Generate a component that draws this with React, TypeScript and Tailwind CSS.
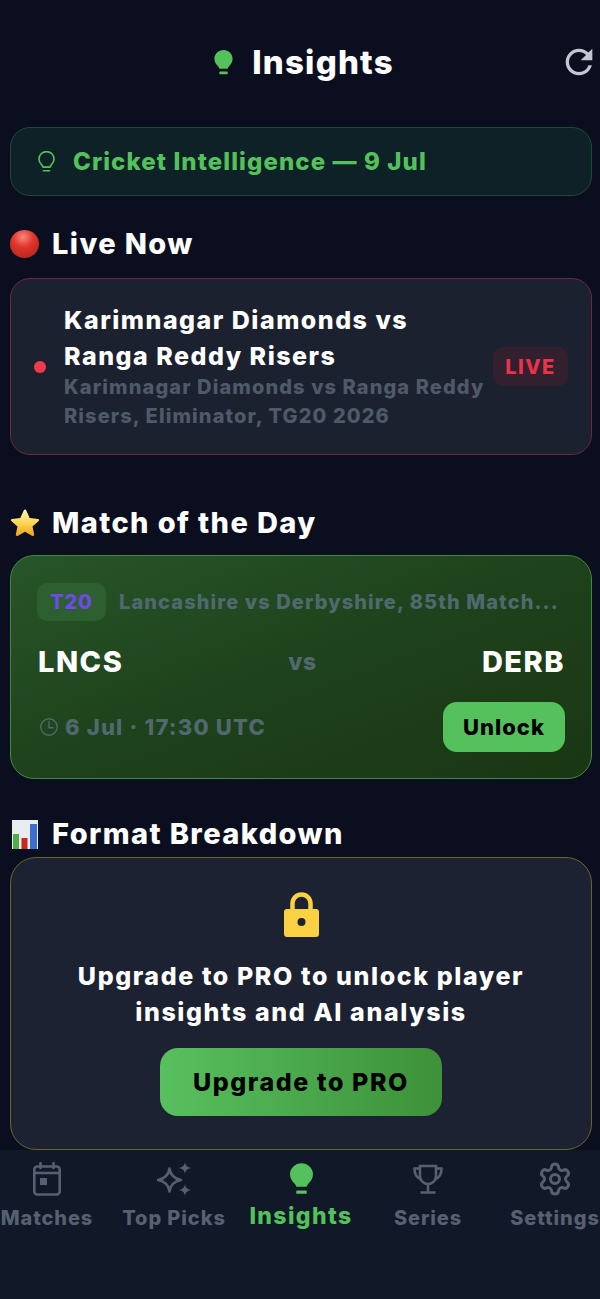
import { Settings } from "lucide-react";
import { IoTimeOutline } from "react-icons/io5";
import { MdRefresh } from "react-icons/md";

const BULB_PATH =
  "M12 0C5.400 0 0 5.200 0 11.600c0 4.200 2.200 7.200 4.400 9.400 1.200 1.200 1.800 2.200 2.200 3.600h10.800c.4-1.400 1-2.400 2.200-3.600 2.200-2.200 4.400-5.200 4.400-9.400C24 5.200 18.600 0 12 0z";

const SolidBulb = ({ className }: { className: string }) => (
  <svg viewBox="0 0 24 33" className={className} fill="currentColor">
    <path d={BULB_PATH} />
    <rect x="6.500" y="28.500" width="11" height="3.500" rx="1" />
  </svg>
);

const OutlineBulb = () => (
  <svg viewBox="0 0 26 35" className="w-[17px] h-[22px] text-[#55c15c]" fill="none" stroke="currentColor" strokeWidth="2.600">
    <path transform="translate(1 1)" d={BULB_PATH} />
    <path d="M8 31.500h10" strokeLinecap="round" />
  </svg>
);

const RedBall = () => (
  <svg viewBox="0 0 30 30" className="w-[30px] h-[30px] shrink-0">
    <defs>
      <radialGradient id="ball" cx="45%" cy="25%" r="80%">
        <stop offset="0%" stopColor="#f58a7c" />
        <stop offset="45%" stopColor="#e2352b" />
        <stop offset="100%" stopColor="#b3261e" />
      </radialGradient>
    </defs>
    <ellipse cx="14.500" cy="15" rx="14.500" ry="14" fill="url(#ball)" />
  </svg>
);

const StarEmoji = () => (
  <svg viewBox="0 0 30 30" className="w-[30px] h-[30px] shrink-0">
    <defs>
      <linearGradient id="star" x1="0" y1="0" x2="0" y2="1">
        <stop offset="0%" stopColor="#fff3b8" />
        <stop offset="55%" stopColor="#fbd34d" />
        <stop offset="100%" stopColor="#f0a020" />
      </linearGradient>
    </defs>
    <path
      d="M15 1.500c.6 0 1 .4 1.300 1l3.400 7.600 8.300.9c1.200.1 1.500 1.200.7 2l-6.200 5.500 1.700 8.100c.2 1.100-.8 1.800-1.800 1.300L15 23.800l-7.400 4.100c-1 .5-2-.2-1.800-1.300l1.700-8.100L1.300 13c-.8-.8-.5-1.900.7-2l8.300-.9 3.400-7.600c.3-.6.700-1 1.300-1z"
      fill="url(#star)"
    />
  </svg>
);

const ChartEmoji = () => (
  <svg viewBox="0 0 30 30" className="w-[30px] h-[30px] shrink-0">
    <rect x="2" y="1" width="26" height="29" fill="#e9ecef" />
    <rect x="3" y="15" width="6" height="15" fill="#4fae4a" />
    <rect x="11.500" y="19" width="6" height="11" fill="#c8281f" />
    <rect x="20" y="5" width="7" height="25" fill="#3a6fd0" />
  </svg>
);

const LockIcon = () => (
  <svg viewBox="0 0 35 45" className="w-[35px] h-[45px]">
    <path d="M8.500 20V11.500a9 9 0 0 1 18 0V20" fill="none" stroke="#fad143" strokeWidth="4.500" />
    <rect y="17" width="35" height="28" rx="3" fill="#fad143" />
    <ellipse cx="17.500" cy="30" rx="4" ry="4" fill="#1c2231" />
  </svg>
);

const CalendarIcon = () => (
  <svg viewBox="0 0 28 34" className="w-[28px] h-[34px]" fill="none" stroke="currentColor">
    <rect x="1.300" y="4.500" width="25.400" height="28" rx="3" strokeWidth="2.600" />
    <path d="M1.300 11h25.400" strokeWidth="2.600" />
    <path d="M7.500 1v5M20.500 1v5" strokeWidth="2.600" strokeLinecap="round" />
    <rect x="7" y="16" width="7" height="7" fill="currentColor" stroke="none" />
  </svg>
);

const SparklesIcon = () => (
  <svg viewBox="0 0 34 34" className="w-[34px] h-[34px]" fill="currentColor">
    <path
      d="M12.500 6.500C13.500 13 17 16.800 24 18 17 19.200 13.500 23 12.500 29.500 11.500 23 8 19.200 1 18 8 16.800 11.500 13 12.500 6.500z"
      fill="none"
      stroke="currentColor"
      strokeWidth="2.600"
      strokeLinejoin="round"
    />
    <path d="M28 0c.5 3.500 2 5 6 6-4 1-5.500 2.500-6 6-.5-3.500-2-5-6-6 4-1 5.500-2.500 6-6z" />
    <path d="M28 22c.5 3.500 2 5 6 6-4 1-5.500 2.500-6 6-.5-3.500-2-5-6-6 4-1 5.500-2.500 6-6z" />
  </svg>
);

const TrophyIcon = () => (
  <svg viewBox="0 0 30 30" className="w-[30px] h-[30px]" fill="none" stroke="currentColor" strokeWidth="2.600">
    <path d="M7 2h16v10a8 8 0 0 1-16 0z" />
    <path d="M7 4.500H1.500c0 5.500 2 9.500 7 11M23 4.500h5.500c0 5.500-2 9.500-7 11" />
    <path d="M15 20v8M7.500 28.500h15" />
  </svg>
);

const SectionTitle = ({ icon, title }: { icon: React.ReactNode; title: string }) => (
  <div className="flex items-center gap-3">
    {icon}
    <h2 className="text-[29px] leading-[34px] font-extrabold tracking-[1.400px] text-white">{title}</h2>
  </div>
);

const tabs = [
  { key: "matches", label: "Matches", icon: <CalendarIcon /> },
  { key: "picks", label: "Top Picks", icon: <SparklesIcon /> },
  { key: "insights", label: "Insights", icon: <SolidBulb className="w-[23px] h-[34px]" />, active: true },
  { key: "series", label: "Series", icon: <TrophyIcon /> },
  { key: "settings", label: "Settings", icon: <Settings size={36} strokeWidth={2} /> },
];

export default function App() {
  return (
    <div className="w-[600px] h-[1299px] flex flex-col bg-[#0b0e1f] font-['Inter',sans-serif] overflow-hidden">
      <div className="pl-[10px] pr-2 flex flex-col">
        {/* Header */}
        <div className="mt-[42px] h-[36px] grid grid-cols-[1fr_auto_1fr] items-center">
          <div />
          <div className="flex items-center gap-[19px] pl-[6px]">
            <SolidBulb className="w-[19px] h-[25px] text-[#55c15c]" />
            <h1 className="text-[33px] leading-[36px] font-extrabold tracking-[1.200px] text-white">Insights</h1>
          </div>
          <div className="flex justify-end">
            <MdRefresh size={40} className="text-[#c2c6cd] -mr-[7px]" />
          </div>
        </div>

        {/* Banner */}
        <div className="mt-[49px] h-[69px] flex items-center gap-[18px] pl-[27px] rounded-[20px] border border-[#1d4a36] bg-[#0e2126]">
          <OutlineBulb />
          <span className="text-[24px] font-extrabold tracking-[1.100px] text-[#55c15c]">Cricket Intelligence — 9 Jul</span>
        </div>

        <div className="mt-[31px]">
          <SectionTitle icon={<RedBall />} title="Live Now" />
        </div>

        {/* Live card */}
        <div className="mt-[17px] h-[177px] flex items-center rounded-[20px] border border-[#6f2840] bg-[#1c2130] pl-[23px] pr-[23px]">
          <span className="w-3 h-3 rounded-full bg-[#ef3a4f] shrink-0" />
          <div className="ml-[18px] w-[428px] shrink-0">
            <div className="text-[25px] leading-[36px] font-extrabold tracking-[1.500px] text-white whitespace-nowrap">
              Karimnagar Diamonds vs
              <br />
              Ranga Reddy Risers
            </div>
            <div className="mt-[-1px] text-[20px] leading-[29px] font-extrabold tracking-[1.100px] text-[#4f5967] whitespace-nowrap">
              Karimnagar Diamonds vs Ranga Reddy
              <br />
              Risers, Eliminator, TG20 2026
            </div>
          </div>
          <span className="ml-auto shrink-0 h-[39px] w-[75px] flex items-center justify-center rounded-[10px] bg-[#33202f] text-[20px] font-extrabold tracking-[1.500px] text-[#e8334a]">
            LIVE
          </span>
        </div>

        <div className="mt-[51px]">
          <SectionTitle icon={<StarEmoji />} title="Match of the Day" />
        </div>

        {/* Match card */}
        <div className="mt-[15px] h-[224px] rounded-[24px] border border-[#3d8a43] bg-gradient-to-br from-[#28552a] via-[#1e421b] to-[#1a3614] pl-[27px] pr-[26px] pt-[27px]">
          <div className="flex items-center gap-[13px] -ml-[1px]">
            <span className="w-[69px] h-[38px] flex items-center justify-center rounded-[10px] bg-[#2d5f30] text-[20px] font-extrabold tracking-[0.800px] text-[#6e4be8]">
              T20
            </span>
            <span className="text-[20px] font-extrabold tracking-[1.100px] text-[#50696f] whitespace-nowrap">
              Lancashire vs Derbyshire, 85th Match...
            </span>
          </div>
          <div className="mt-[21px] flex items-center justify-between">
            <span className="text-[29px] leading-[40px] font-extrabold tracking-[1.500px] text-white">LNCS</span>
            <span className="text-[23px] font-extrabold tracking-[0.800px] text-[#50696f]">vs</span>
            <span className="text-[29px] leading-[40px] font-extrabold tracking-[1.500px] text-white">DERB</span>
          </div>
          <div className="mt-[20px] flex items-center justify-between">
            <div className="flex items-center gap-[5px] text-[#50696f]">
              <IoTimeOutline size={22} />
              <span className="text-[22px] font-extrabold tracking-[1.200px]">6 Jul · 17:30 UTC</span>
            </div>
            <button className="w-[122px] h-[50px] rounded-[14px] bg-[#55c15c] text-[22px] font-extrabold tracking-[1px] text-black">
              Unlock
            </button>
          </div>
        </div>

        <div className="mt-[38px]">
          <SectionTitle icon={<ChartEmoji />} title="Format Breakdown" />
        </div>

        {/* PRO card */}
        <div className="mt-[6px] h-[293px] flex flex-col items-center rounded-[26px] border border-[#66662f] bg-[#1c2231] pt-[34px]">
          <LockIcon />
          <p className="mt-[21px] text-center text-[25px] leading-[36px] font-extrabold tracking-[1.600px] text-white whitespace-nowrap">
            Upgrade to PRO to unlock player
            <br />
            insights and AI analysis
          </p>
          <button className="mt-[18px] pt-[2px] w-[282px] h-[68px] rounded-[18px] bg-gradient-to-r from-[#58c05f] to-[#3d9139] text-[25px] font-extrabold tracking-[1.600px] text-black">
            Upgrade to PRO
          </button>
        </div>
      </div>

      {/* Tab bar */}
      <nav className="flex-1 flex justify-between items-start bg-[#111827] pl-[2px] pt-[10px]">
        {tabs.map((tab) => (
          <div
            key={tab.key}
            className={`w-[90px] flex flex-col items-center ${tab.active ? "text-[#55c15c]" : "text-[#566070]"}`}
          >
            <div className="h-[38px] flex items-center justify-center">{tab.icon}</div>
            <span
              className={`whitespace-nowrap font-extrabold ${
                tab.active ? "mt-[1px] text-[23px] tracking-[1.400px]" : "mt-[5px] text-[20px] tracking-[0.900px]"
              }`}
            >
              {tab.label}
            </span>
          </div>
        ))}
      </nav>
    </div>
  );
}
